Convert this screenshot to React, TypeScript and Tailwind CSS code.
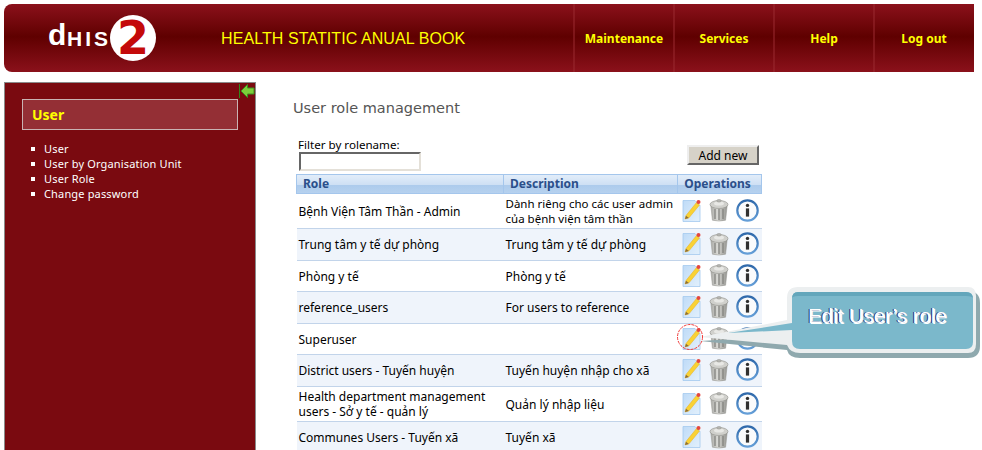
const navItems = ["Maintenance", "Services", "Help", "Log out"];

const sideLinks = ["User", "User by Organisation Unit", "User Role", "Change password"];

const roles = [
    { name: "Bệnh Viện Tâm Thần - Admin", description: "Dành riêng cho các user admin\ncủa bệnh viện tâm thần", height: "h-[35px]", small: true },
    { name: "Trung tâm y tế dự phòng", description: "Trung tâm y tế dự phòng", height: "h-[32px]" },
    { name: "Phòng y tế", description: "Phòng y tế", height: "h-[31px]" },
    { name: "reference_users", description: "For users to reference", height: "h-[32px]" },
    { name: "Superuser", description: "", height: "h-[31px]" },
    { name: "District users - Tuyến huyện", description: "Tuyến huyện nhập cho xã", height: "h-[32px]" },
    { name: "Health department management users - Sở y tế - quản lý", description: "Quản lý nhập liệu", height: "h-[35px]" },
    { name: "Communes Users - Tuyến xã", description: "Tuyến xã", height: "h-[32px]" },
];

const EditIcon = () => (
    <svg width="20" height="25" viewBox="0 0 20 25" className="shrink-0">
        <defs>
            <linearGradient id="sheet" x1="0" x2="1" y1="0" y2="1">
                <stop offset="0" stopColor="#bfdbf7" />
                <stop offset="1" stopColor="#e2f0fc" />
            </linearGradient>
        </defs>
        <path d="M1 2.5H13L18 7.5V23.5H1Z" fill="url(#sheet)" stroke="#a3c9ef" strokeWidth="0.8" />
        <path d="M4 17.5L14.5 4.5L17.5 7L7 19.8L3 21Z" fill="#f9d234" stroke="#e8ad1e" strokeWidth="0.5" />
        <path d="M3 21L4 17.8L6.8 20Z" fill="#8a6d3a" />
        <circle cx="16.5" cy="4" r="2" fill="#e4473f" />
    </svg>
);

const TrashIcon = () => (
    <svg width="20" height="24" viewBox="0 0 20 24" className="shrink-0">
        <defs>
            <linearGradient id="can" x1="0" x2="1" y1="0" y2="0">
                <stop offset="0" stopColor="#a8a8a4" />
                <stop offset="0.4" stopColor="#d8d8d4" />
                <stop offset="1" stopColor="#949490" />
            </linearGradient>
        </defs>
        <path d="M1.8 7.5H18.2L16.6 22.2Q10 24 3.4 22.2Z" fill="url(#can)" stroke="#989894" strokeWidth="0.5" />
        <path d="M6 11V21M10 11V22M14 11V21" stroke="#7f7f7b" strokeWidth="1.2" />
        <ellipse cx="10" cy="6.5" rx="9" ry="4" fill="#d0d0cc" stroke="#8e8e8a" strokeWidth="0.6" />
        <ellipse cx="10" cy="5.5" rx="5" ry="2" fill="#e8e8e5" />
        <ellipse cx="10" cy="2.8" rx="2.2" ry="1.3" fill="#b5b5b1" stroke="#8e8e8a" strokeWidth="0.5" />
    </svg>
);

const InfoIcon = () => (
    <svg width="23" height="23" viewBox="0 0 23 23" className="shrink-0">
        <defs>
            <linearGradient id="ring" x1="0" x2="0" y1="0" y2="1">
                <stop offset="0" stopColor="#2f69ab" />
                <stop offset="1" stopColor="#659fd8" />
            </linearGradient>
        </defs>
        <circle cx="11.5" cy="11.5" r="10.2" fill="#fafbfc" stroke="url(#ring)" strokeWidth="2.2" />
        <rect x="9.9" y="9.4" width="3.2" height="8.2" fill="#2f2f2f" />
        <circle cx="11.5" cy="6.4" r="1.7" fill="#2f2f2f" />
    </svg>
);

const Callout = () => (
    <>
        <svg width="982" height="450" className="absolute left-0 top-0 pointer-events-none">
            <path d="M792 291H968Q980 291 980 303V346Q980 358 968 358H800Q789 358 787 350L700 341L787 336Z" fill="#8fa9ae" />
            <path d="M798 287H968Q976 287 976 296V344Q976 353 968 353H800Q790 353 787 345L700 337L787 320V298Q787 287 798 287Z" fill="#eceff0" />
            <path d="M798 292H966Q973 292 973 299V342Q973 349 966 349H800Q792 349 792 341V330L728 333L792 323V299Q792 292 798 292Z" fill="#7bb8cb" />
            <path d="M792 299Q792 292 798 292H966Q973 292 973 299Q973 296 966 296H798Q792 296 792 299Z" fill="#63a6bb" />
            <circle cx="690" cy="337" r="12.5" fill="none" stroke="#f03a3a" strokeWidth="1" strokeDasharray="3 1" />
        </svg>
        <span className="absolute left-[808px] top-[304px] text-[20.4px] leading-6 text-white font-['Liberation_Sans',sans-serif] [text-shadow:-1px_0_0_#1c2f7a,1px_1px_0_#ffffff]">
            Edit User’s role
        </span>
    </>
);

export default function App() {
    return (
        <div className="relative h-[450px] w-[982px] overflow-hidden bg-white pl-1 pt-1 font-['Noto_Sans',sans-serif]">
            <header className="flex h-[68px] w-[970px] items-center rounded-l-lg bg-[linear-gradient(#8b111b_0%,#5f0000_48%,#8b111b_100%)]">
                <div className="relative ml-[44px] h-[68px] w-[173px] shrink-0 font-['Liberation_Sans',sans-serif] font-bold">
                    <span className="absolute left-0 top-[13px] text-[30px] leading-[36px] text-white">d</span>
                    <span className="absolute left-[19px] top-[23px] text-[21px] leading-[24px] tracking-[3px] text-white">
                        HIS
                    </span>
                    <span className="absolute left-[62px] top-[11px] flex h-[46px] w-[46px] items-center justify-center rounded-full bg-white font-['DejaVu_Sans',sans-serif] text-[46px] leading-none text-[#c40a0a]">
                        2
                    </span>
                </div>
                <h1 className="w-[353px] shrink-0 pt-[1px] font-['Liberation_Sans',sans-serif] text-[16px] tracking-[0.08px] text-[#ffff00]">
                    HEALTH STATITIC ANUAL BOOK
                </h1>
                <nav className="-ml-[1px] flex h-full">
                    {navItems.map((item) => (
                        <a key={item} className="flex h-full w-[100px] items-center justify-center border-l-2 border-[#9a2a30]/50 pt-[1px] text-[12px] font-bold text-[#ffff00]">
                            {item}
                        </a>
                    ))}
                </nav>
            </header>

            <div className="mt-[10px] flex">
                <aside className="relative h-[380px] w-[252px] shrink-0 border border-[#8a8a8a] bg-[#7a0a10] pl-[17px] pt-[16px]">
                    <svg width="16" height="16" viewBox="0 0 16 16" className="absolute right-0 top-0">
                        <path d="M0.5 1V15" stroke="#2f8a1e" />
                        <path d="M2 8L8.5 1.5V5H15V11H8.5V14.5Z" fill="#7ccf3a" stroke="#3f8f22" />
                    </svg>
                    <div className="flex h-[31px] w-[216px] items-center border border-[#c9b3b3] bg-[#942f35] pl-[9px] text-[14px] font-bold text-[#ffff00]">
                        User
                    </div>
                    <ul className="mt-[11px] pl-[9px] text-[11px] leading-[15px] tracking-[0.16px] text-white">
                        {sideLinks.map((link) => (
                            <li key={link} className="flex items-center gap-[9px]">
                                <span className="h-[4px] w-[4px] bg-white" />
                                {link}
                            </li>
                        ))}
                    </ul>
                </aside>

                <main className="ml-[37px] w-[470px]">
                    <h2 className="mt-[16px] font-['DejaVu_Sans',sans-serif] text-[14.5px] leading-5 text-[#555555]">
                        User role management
                    </h2>
                    <div className="ml-[3px] mt-[20px] w-[465px] text-[12px] text-black">
                        <div className="flex h-[36px] items-start justify-between">
                            <div className="ml-[2px] leading-[14px]">
                                <label className="block text-[11.6px]">Filter by rolename:</label>
                                <input className="ml-[1px] block h-[19px] w-[122px] border-2 border-b-[#e4e0d8] border-l-[#666666] border-r-[#e4e0d8] border-t-[#666666] bg-white" />
                            </div>
                            <button className="mr-[2px] mt-[7px] h-[20px] w-[72px] border-2 border-b-[#666666] border-l-[#eeeeee] border-r-[#666666] border-t-[#eeeeee] bg-[#d6d2c8] text-[12px]">
                                Add new
                            </button>
                        </div>
                        <table className="w-[465px] table-fixed border-collapse">
                            <colgroup>
                                <col className="w-[207px]" />
                                <col className="w-[174px]" />
                                <col className="w-[84px]" />
                            </colgroup>
                            <thead>
                                <tr className="h-[19px] bg-[linear-gradient(#e2edf9_0%,#cfe0f4_50%,#adcbec_55%,#b7d2ef_100%)] text-[12px] font-bold text-[#2b4f8a]">
                                    <th className="border border-[#a4c6ec] pl-[6px] text-left">Role</th>
                                    <th className="border border-[#a4c6ec] pl-[6px] text-left">Description</th>
                                    <th className="border border-[#a4c6ec] pr-[4px] text-center">Operations</th>
                                </tr>
                            </thead>
                            <tbody>
                                {roles.map((role, i) => (
                                    <tr key={role.name} className={`${role.height} border-b border-[#c2d4ea] ${i % 2 === 1 ? "bg-[#eff4fb]" : "bg-white"}`}>
                                        <td className="pl-[2px] leading-[15px]">{role.name}</td>
                                        <td className={`whitespace-pre-line pl-[2px] leading-[15px] ${role.small ? "text-[11.5px]" : "text-[12px]"}`}>{role.description}</td>
                                        <td className="pl-[4px]">
                                            <div className="mb-[2px] flex items-center gap-[7px]">
                                                <EditIcon />
                                                <TrashIcon />
                                                <InfoIcon />
                                            </div>
                                        </td>
                                    </tr>
                                ))}
                            </tbody>
                        </table>
                    </div>
                </main>
            </div>
            <Callout />
        </div>
    );
}
